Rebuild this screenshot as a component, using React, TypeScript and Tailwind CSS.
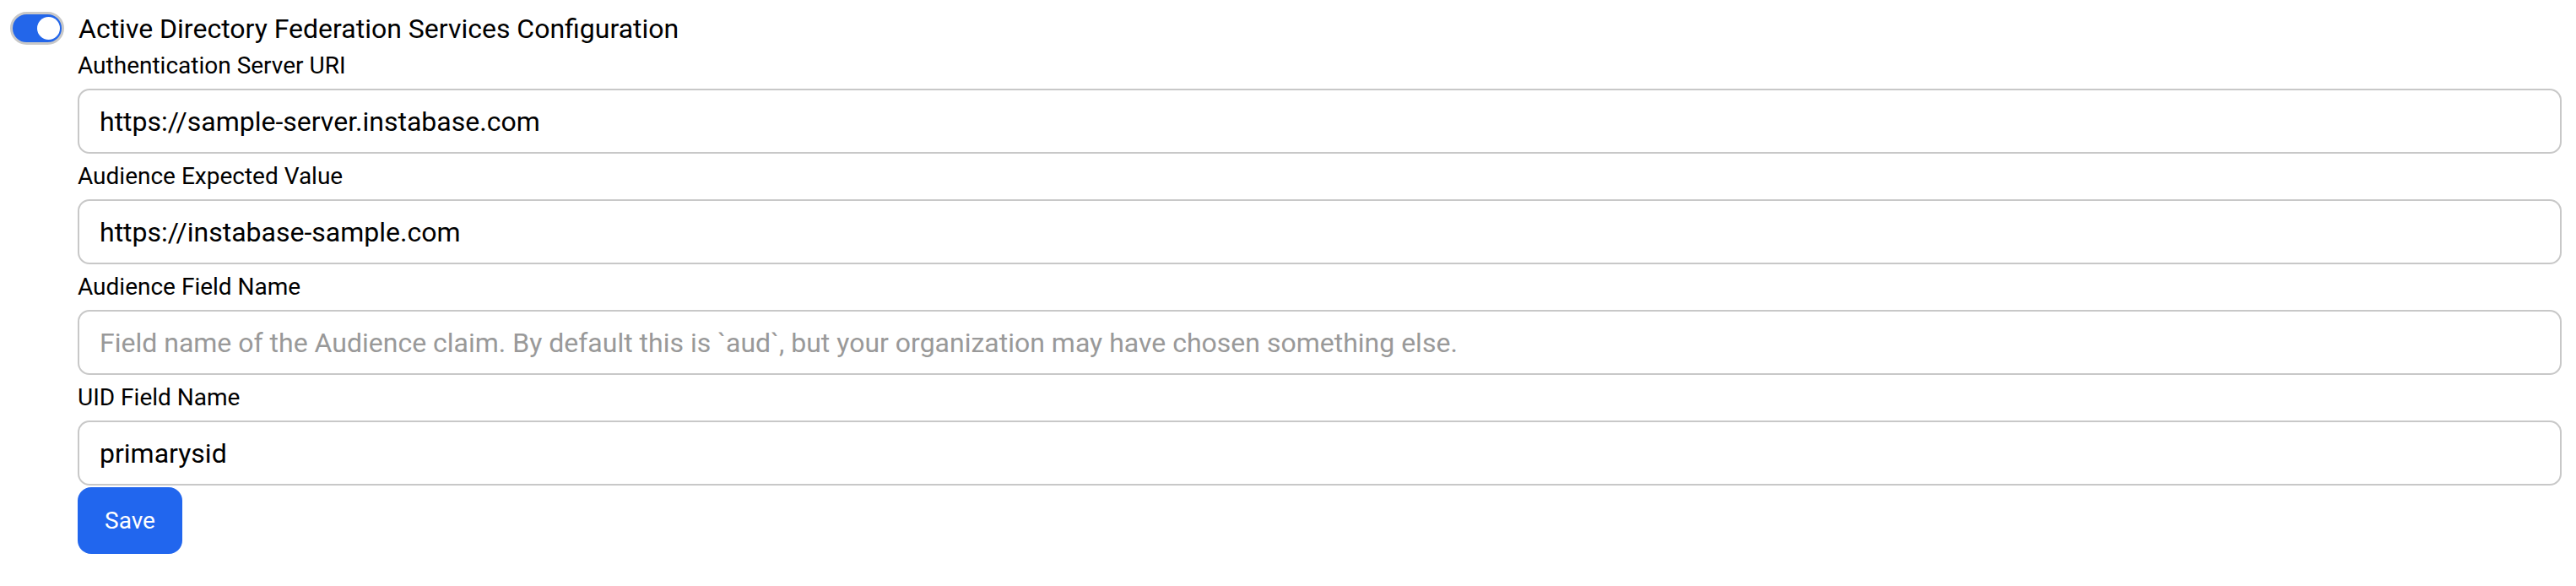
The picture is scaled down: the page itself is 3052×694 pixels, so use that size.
import React, { useState } from "react";

const fields = [
  { label: "Authentication Server URI", value: "https://sample-server.instabase.com", placeholder: "" },
  { label: "Audience Expected Value", value: "https://instabase-sample.com", placeholder: "" },
  {
    label: "Audience Field Name",
    value: "",
    placeholder:
      "Field name of the Audience claim. By default this is `aud`, but your organization may have chosen something else.",
  },
  { label: "UID Field Name", value: "primarysid", placeholder: "" },
];

export default function App() {
  const [enabled, setEnabled] = useState(true);
  const [values, setValues] = useState(fields.map((f) => f.value));

  return (
    <div className="min-h-[694px] w-full bg-white font-['Roboto',sans-serif] text-black">
      <div className="flex items-center pl-[12px] pt-[14px]">
        <button
          onClick={() => setEnabled(!enabled)}
          className="flex h-[39px] w-[64px] items-center justify-end rounded-full border-[3px] border-[#c8c8c8] bg-[#2366ea] pr-[2px]"
        >
          <span className="h-[27px] w-[27px] rounded-full bg-white" />
        </button>
        <span className="ml-[17px] text-[32px] leading-[38px]">
          Active Directory Federation Services Configuration
        </span>
      </div>

      <div className="pl-[92px] pr-[17px]">
        {fields.map((f, i) => (
          <div key={f.label} className={i === 0 ? "pt-[8px]" : "pt-[10px]"}>
            <label className="block text-[28px] leading-[34px]">{f.label}</label>
            <input
              value={values[i]}
              placeholder={f.placeholder}
              onChange={(e) => {
                const next = [...values];
                next[i] = e.target.value;
                setValues(next);
              }}
              className="mt-[10px] block h-[77px] w-full rounded-[14px] border-2 border-[#c8c8c8] bg-white px-[24px] text-[32px] text-black outline-none placeholder:text-[#999999]"
            />
          </div>
        ))}
        <button className="mt-[2px] h-[79px] w-[124px] rounded-[16px] bg-[#2166ee] text-[28px] text-white">
          Save
        </button>
      </div>
    </div>
  );
}
